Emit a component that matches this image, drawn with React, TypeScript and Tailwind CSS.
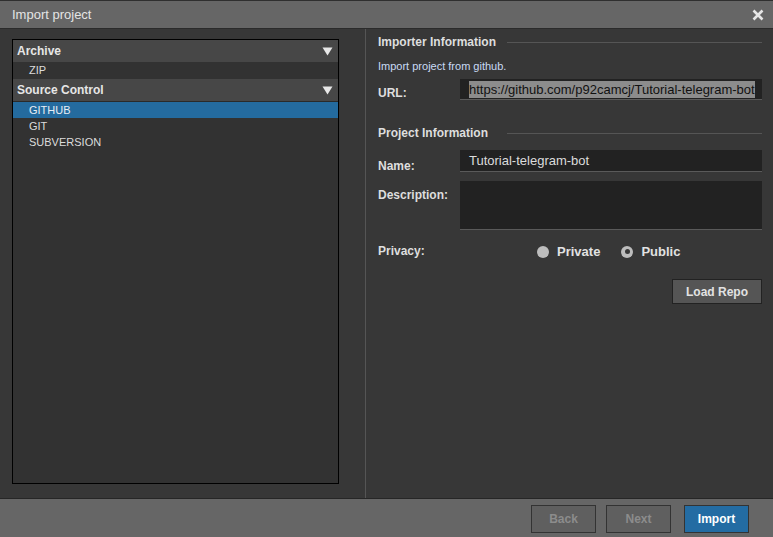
import React from 'react'

const font = { fontFamily: '"Liberation Sans", Arial, sans-serif' }

function Caret() {
  return (
    <svg width="11" height="9" viewBox="0 0 11 9" className="shrink-0">
      <path d="M0.5 0.5 H10.5 L5.5 8.5 Z" fill="#e8e8e8" />
    </svg>
  )
}

function GroupHeader({ label }: { label: string }) {
  return (
    <div className="flex h-[22px] items-center justify-between bg-[#474747] pl-[4px] pr-[5px] text-[12px] font-bold text-[#e6e6e6]">
      <span>{label}</span>
      <Caret />
    </div>
  )
}

function Item({ label, selected, tall }: { label: string; selected?: boolean; tall?: boolean }) {
  return (
    <div className={`flex ${tall ? 'h-[17px]' : 'h-[16px]'} items-center pl-[16px] text-[11px] ${selected ? 'bg-[#246b9f] text-[#e8eef5]' : 'text-[#dcdcdc]'}`}>
      {label}
    </div>
  )
}

function Section({ title }: { title: string }) {
  return (
    <div className="flex h-[16px] items-center text-[12px] leading-[16px] font-bold text-[#dedede]">
      <span className="w-[129px] whitespace-nowrap">{title}</span>
      <div className="h-px flex-1 bg-[#555]" />
    </div>
  )
}

function Radio({ checked, label }: { checked?: boolean; label: string }) {
  return (
    <div className="flex items-center gap-[8px]">
      {checked ? (
        <div className="flex h-[12px] w-[12px] items-center justify-center rounded-full bg-[#bdbdbd]">
          <div className="h-[5px] w-[5px] rounded-full bg-[#383838]" />
        </div>
      ) : (
        <div className="h-[12px] w-[12px] rounded-full bg-[#bdbdbd]" />
      )}
      <span className="text-[13px] leading-[16px] font-bold text-[#e2e2e2]">{label}</span>
    </div>
  )
}

const label = 'w-[82px] text-[12px] leading-[14px] font-bold text-[#dedede]'

export default function App() {
  return (
    <div style={font} className="flex h-[537px] w-[773px] flex-col overflow-hidden bg-[#373737]">
      <div className="flex h-[29px] shrink-0 items-center justify-between border-t border-b border-t-[#2f2f2f] border-b-[#2b2b2b] bg-[#666666] pl-[12px] pr-[9px]">
        <span className="pt-[1px] text-[13px] text-[#e4e4e4]">Import project</span>
        <svg width="12" height="12" viewBox="0 0 12 12">
          <path d="M1.5 1.5 L10.5 10.5 M10.5 1.5 L1.5 10.5" stroke="#e6e6e6" strokeWidth="2.6" />
        </svg>
      </div>

      <div className="flex min-h-0 flex-1">
        <div className="flex w-[366px] shrink-0 border-r border-[#555] pl-[12px] pt-[10px] pb-[14px]">
          <div className="w-[327px] border border-black bg-[#323232]">
            <GroupHeader label="Archive" />
            <Item label="ZIP" tall />
            <div className="border-b border-[#2a2a2a]">
              <GroupHeader label="Source Control" />
            </div>
            <Item label="GITHUB" selected />
            <Item label="GIT" />
            <Item label="SUBVERSION" />
          </div>
        </div>

        <div className="flex flex-1 flex-col pl-[12px] pr-[11px] pt-[5px]">
          <Section title="Importer Information" />
          <div className="mt-[9px] h-[14px] text-[11px] leading-[14px] text-[#c9daf5]">Import project from github.</div>
          <div className="mt-[6px] flex h-[21px]">
            <div className={`${label} pt-[7px]`}>URL:</div>
            <div className="flex h-[21px] flex-1 items-center border-b border-[#5a5a5a] bg-[#222] pl-[9px]">
              <span className="bg-[#8c8c8c] text-[13px] leading-[17px] text-[#111]">https://github.com/p92camcj/Tutorial-telegram-bot</span>
            </div>
          </div>

          <div className="mt-[25px]">
            <Section title="Project Information" />
          </div>
          <div className="mt-[9px] flex h-[22px]">
            <div className={`${label} pt-[9px]`}>Name:</div>
            <div className="flex h-[22px] flex-1 items-center border-b border-[#5a5a5a] bg-[#222] pl-[9px] text-[13px] text-[#dcdcdc]">
              Tutorial-telegram-bot
            </div>
          </div>
          <div className="mt-[9px] flex h-[49px]">
            <div className={`${label} pt-[7px]`}>Description:</div>
            <div className="h-[49px] flex-1 border-b border-[#5a5a5a] bg-[#222]" />
          </div>
          <div className="mt-[13px] flex h-[16px]">
            <div className={`${label} w-[159px] pt-[1px]`}>Privacy:</div>
            <div className="flex gap-[21px] pt-[1px]">
              <Radio label="Private" />
              <Radio label="Public" checked />
            </div>
          </div>
          <div className="mt-[20px] flex justify-end">
            <button className="flex h-[25px] w-[90px] items-center justify-center border border-[#222] bg-[#555] text-[12px] font-bold text-[#e2e2e2]">
              Load Repo
            </button>
          </div>
        </div>
      </div>

      <div className="flex h-[39px] shrink-0 items-start justify-end gap-[10px] border-t border-[#262626] bg-[#666666] pr-[24px] pt-[6px]">
        <button className="flex h-[28px] w-[65px] items-center justify-center border border-[#333] bg-[#5f5f5f] text-[12px] font-bold text-[#8c8c8c]">Back</button>
        <button className="flex h-[28px] w-[65px] items-center justify-center border border-[#333] bg-[#5f5f5f] text-[12px] font-bold text-[#8c8c8c]">Next</button>
        <button className="ml-[3px] flex h-[28px] w-[65px] items-center justify-center border border-[#333] bg-[#236ca3] text-[12px] font-bold text-white">Import</button>
      </div>
    </div>
  )
}
